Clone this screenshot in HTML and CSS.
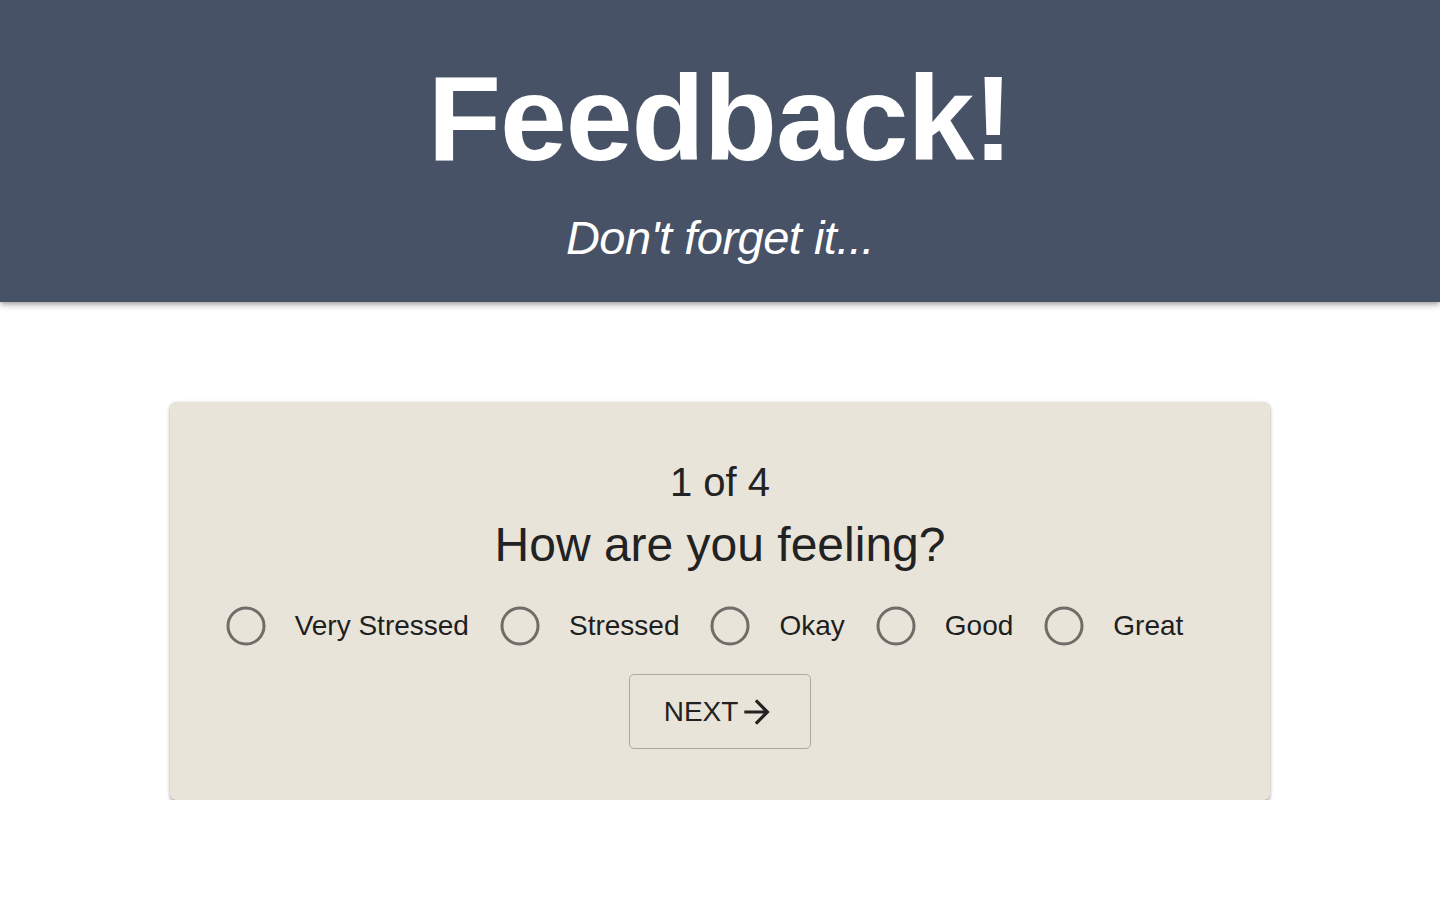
FILE: index.html
```html
<!DOCTYPE html>
<html lang="en">
<head>
<meta charset="utf-8">
<title>Feedback!</title>
<link rel="stylesheet" href="styles.css">
</head>
<body>
<header class="hero">
  <h1 class="hero-title">Feedback!</h1>
  <p class="hero-subtitle">Don't forget it...</p>
</header>
<main class="page">
  <section class="card">
    <div class="step">1 of 4</div>
    <h2 class="question">How are you feeling?</h2>
    <div class="options">
      <label class="option">
        <svg class="radio" viewBox="0 0 40 40" width="40" height="40"><circle cx="20" cy="20" r="18" fill="none" stroke="#6f6d68" stroke-width="3"/></svg>
        <span class="option-label">Very Stressed</span>
      </label>
      <label class="option">
        <svg class="radio" viewBox="0 0 40 40" width="40" height="40"><circle cx="20" cy="20" r="18" fill="none" stroke="#6f6d68" stroke-width="3"/></svg>
        <span class="option-label">Stressed</span>
      </label>
      <label class="option">
        <svg class="radio" viewBox="0 0 40 40" width="40" height="40"><circle cx="20" cy="20" r="18" fill="none" stroke="#6f6d68" stroke-width="3"/></svg>
        <span class="option-label">Okay</span>
      </label>
      <label class="option">
        <svg class="radio" viewBox="0 0 40 40" width="40" height="40"><circle cx="20" cy="20" r="18" fill="none" stroke="#6f6d68" stroke-width="3"/></svg>
        <span class="option-label">Good</span>
      </label>
      <label class="option">
        <svg class="radio" viewBox="0 0 40 40" width="40" height="40"><circle cx="20" cy="20" r="18" fill="none" stroke="#6f6d68" stroke-width="3"/></svg>
        <span class="option-label">Great</span>
      </label>
    </div>
    <button class="next" type="button">
      <span class="next-text">NEXT</span>
      <svg class="next-icon" viewBox="0 0 24 24" width="38" height="38"><path d="M12 4l-1.41 1.41L16.17 11H4v2h12.17l-5.58 5.59L12 20l8-8z" fill="#222"/></svg>
    </button>
  </section>
</main>
</body>
</html>
```
FILE: styles.css
```css
html, body {
  margin: 0;
  padding: 0;
  background: #ffffff;
  font-family: "Liberation Sans", Arial, Helvetica, sans-serif;
  color: #222222;
}

.hero {
  background: #475266;
  color: #ffffff;
  text-align: center;
  padding: 48px 0 34px;
  box-shadow: 0 2px 4px -1px rgba(0,0,0,0.2), 0 4px 5px 0 rgba(0,0,0,0.14), 0 1px 10px 0 rgba(0,0,0,0.12);
  position: relative;
  z-index: 1;
}

.hero-title {
  margin: 0;
  font-size: 120px;
  line-height: 140px;
  font-weight: 700;
  letter-spacing: -1px;
}

.hero-subtitle {
  margin: 20px 0 0;
  font-size: 47px;
  line-height: 60px;
  font-style: italic;
  letter-spacing: -0.5px;
}

.page {
  display: flex;
  justify-content: center;
  padding-top: 100px;
}

.card {
  width: 1100px;
  box-sizing: border-box;
  background: #e8e4da;
  border-radius: 6px;
  box-shadow: 0 2px 3px 0 rgba(0,0,0,0.3), 0 1px 5px 0 rgba(0,0,0,0.12);
  padding: 56px 0 51px;
  display: flex;
  flex-direction: column;
  align-items: center;
  text-align: center;
}

.step {
  font-size: 40px;
  line-height: 48px;
}

.question {
  margin: 11px 0 0;
  font-size: 48px;
  line-height: 56px;
  font-weight: 400;
}

.options {
  margin-top: 29px;
  display: flex;
  justify-content: center;
  align-items: center;
  height: 48px;
}

.option {
  display: flex;
  align-items: center;
  margin-right: 31px;
}

.radio {
  display: block;
  flex: none;
  margin-right: 29px;
}

.option-label {
  font-size: 28px;
  line-height: 32px;
  color: #1e1e1e;
}

.next {
  margin-top: 24px;
  height: 75px;
  padding: 0 34px;
  display: flex;
  align-items: center;
  background: transparent;
  border: 1px solid #aeaaa1;
  border-radius: 5px;
  font-family: inherit;
  color: #222222;
  cursor: pointer;
}

.next-text {
  font-size: 28px;
  line-height: 32px;
}

.next-icon {
  display: block;
  flex: none;
}
```
